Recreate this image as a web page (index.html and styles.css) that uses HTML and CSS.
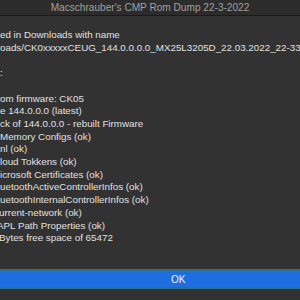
FILE: index.html
```html
<!DOCTYPE html>
<html>
<head>
<meta charset="utf-8">
<link rel="stylesheet" href="styles.css">
</head>
<body>
<div class="dialog">
  <div class="titlebar">Macschrauber's CMP Rom Dump 22-3-2022</div>
  <div class="content">
    <div class="line">ed in Downloads with name</div>
    <div class="line">oads/CK0xxxxxCEUG_144.0.0.0.0_MX25L3205D_22.03.2022_22-33</div>
    <div class="line">&nbsp;</div>
    <div class="line">:</div>
    <div class="line">&nbsp;</div>
    <div class="line">om firmware: CK05</div>
    <div class="line">e 144.0.0.0 (latest)</div>
    <div class="line">ck of 144.0.0.0 - rebuilt Firmware</div>
    <div class="line">Memory Configs (ok)</div>
    <div class="line">nl (ok)</div>
    <div class="line">loud Tokkens (ok)</div>
    <div class="line">icrosoft Certificates (ok)</div>
    <div class="line">uetoothActiveControllerInfos (ok)</div>
    <div class="line">uetoothInternalControllerInfos (ok)</div>
    <div class="line cut">urrent-network (ok)</div>
    <div class="line cut-more">APL Path Properties (ok)</div>
    <div class="line cut">Bytes free space of 65472</div>
  </div>
  <div class="actions">
    <div class="ok-button"><span class="ok-label">OK</span></div>
  </div>
</div>
</body>
</html>
```
FILE: styles.css
```css
html, body {
  margin: 0;
  padding: 0;
  background: #323232;
  overflow: hidden;
}
.dialog {
  width: 300px;
  height: 300px;
  display: flex;
  flex-direction: column;
  background: #323232;
  font-family: "Liberation Sans", "Helvetica", sans-serif;
}
.titlebar {
  height: 15px;
  line-height: 16px;
  text-align: center;
  font-size: 10.1px;
  color: #a0a0a0;
  background: #2c2c2c;
  border-bottom: 1px solid #1b1b1b;
  white-space: nowrap;
}
.content {
  padding-top: 13px;
  color: #e0e0e0;
  font-size: 9.8px;
  line-height: 12.7px;
  white-space: nowrap;
  overflow: hidden;
  flex: 1;
}
.line.cut {
  margin-left: -1px;
}
.line.cut-more {
  margin-left: -3px;
}
.actions {
  height: 31px;
  display: flex;
  align-items: flex-start;
}
.ok-button {
  width: 300px;
  height: 16px;
  border-top: 2px solid #2d6f8d;
  border-bottom: 2px solid #2d6f8d;
  background: #1f6ee0;
  display: flex;
  align-items: center;
}
.ok-label {
  margin-left: 171px;
  color: #f2f2f2;
  font-size: 10px;
}
```
